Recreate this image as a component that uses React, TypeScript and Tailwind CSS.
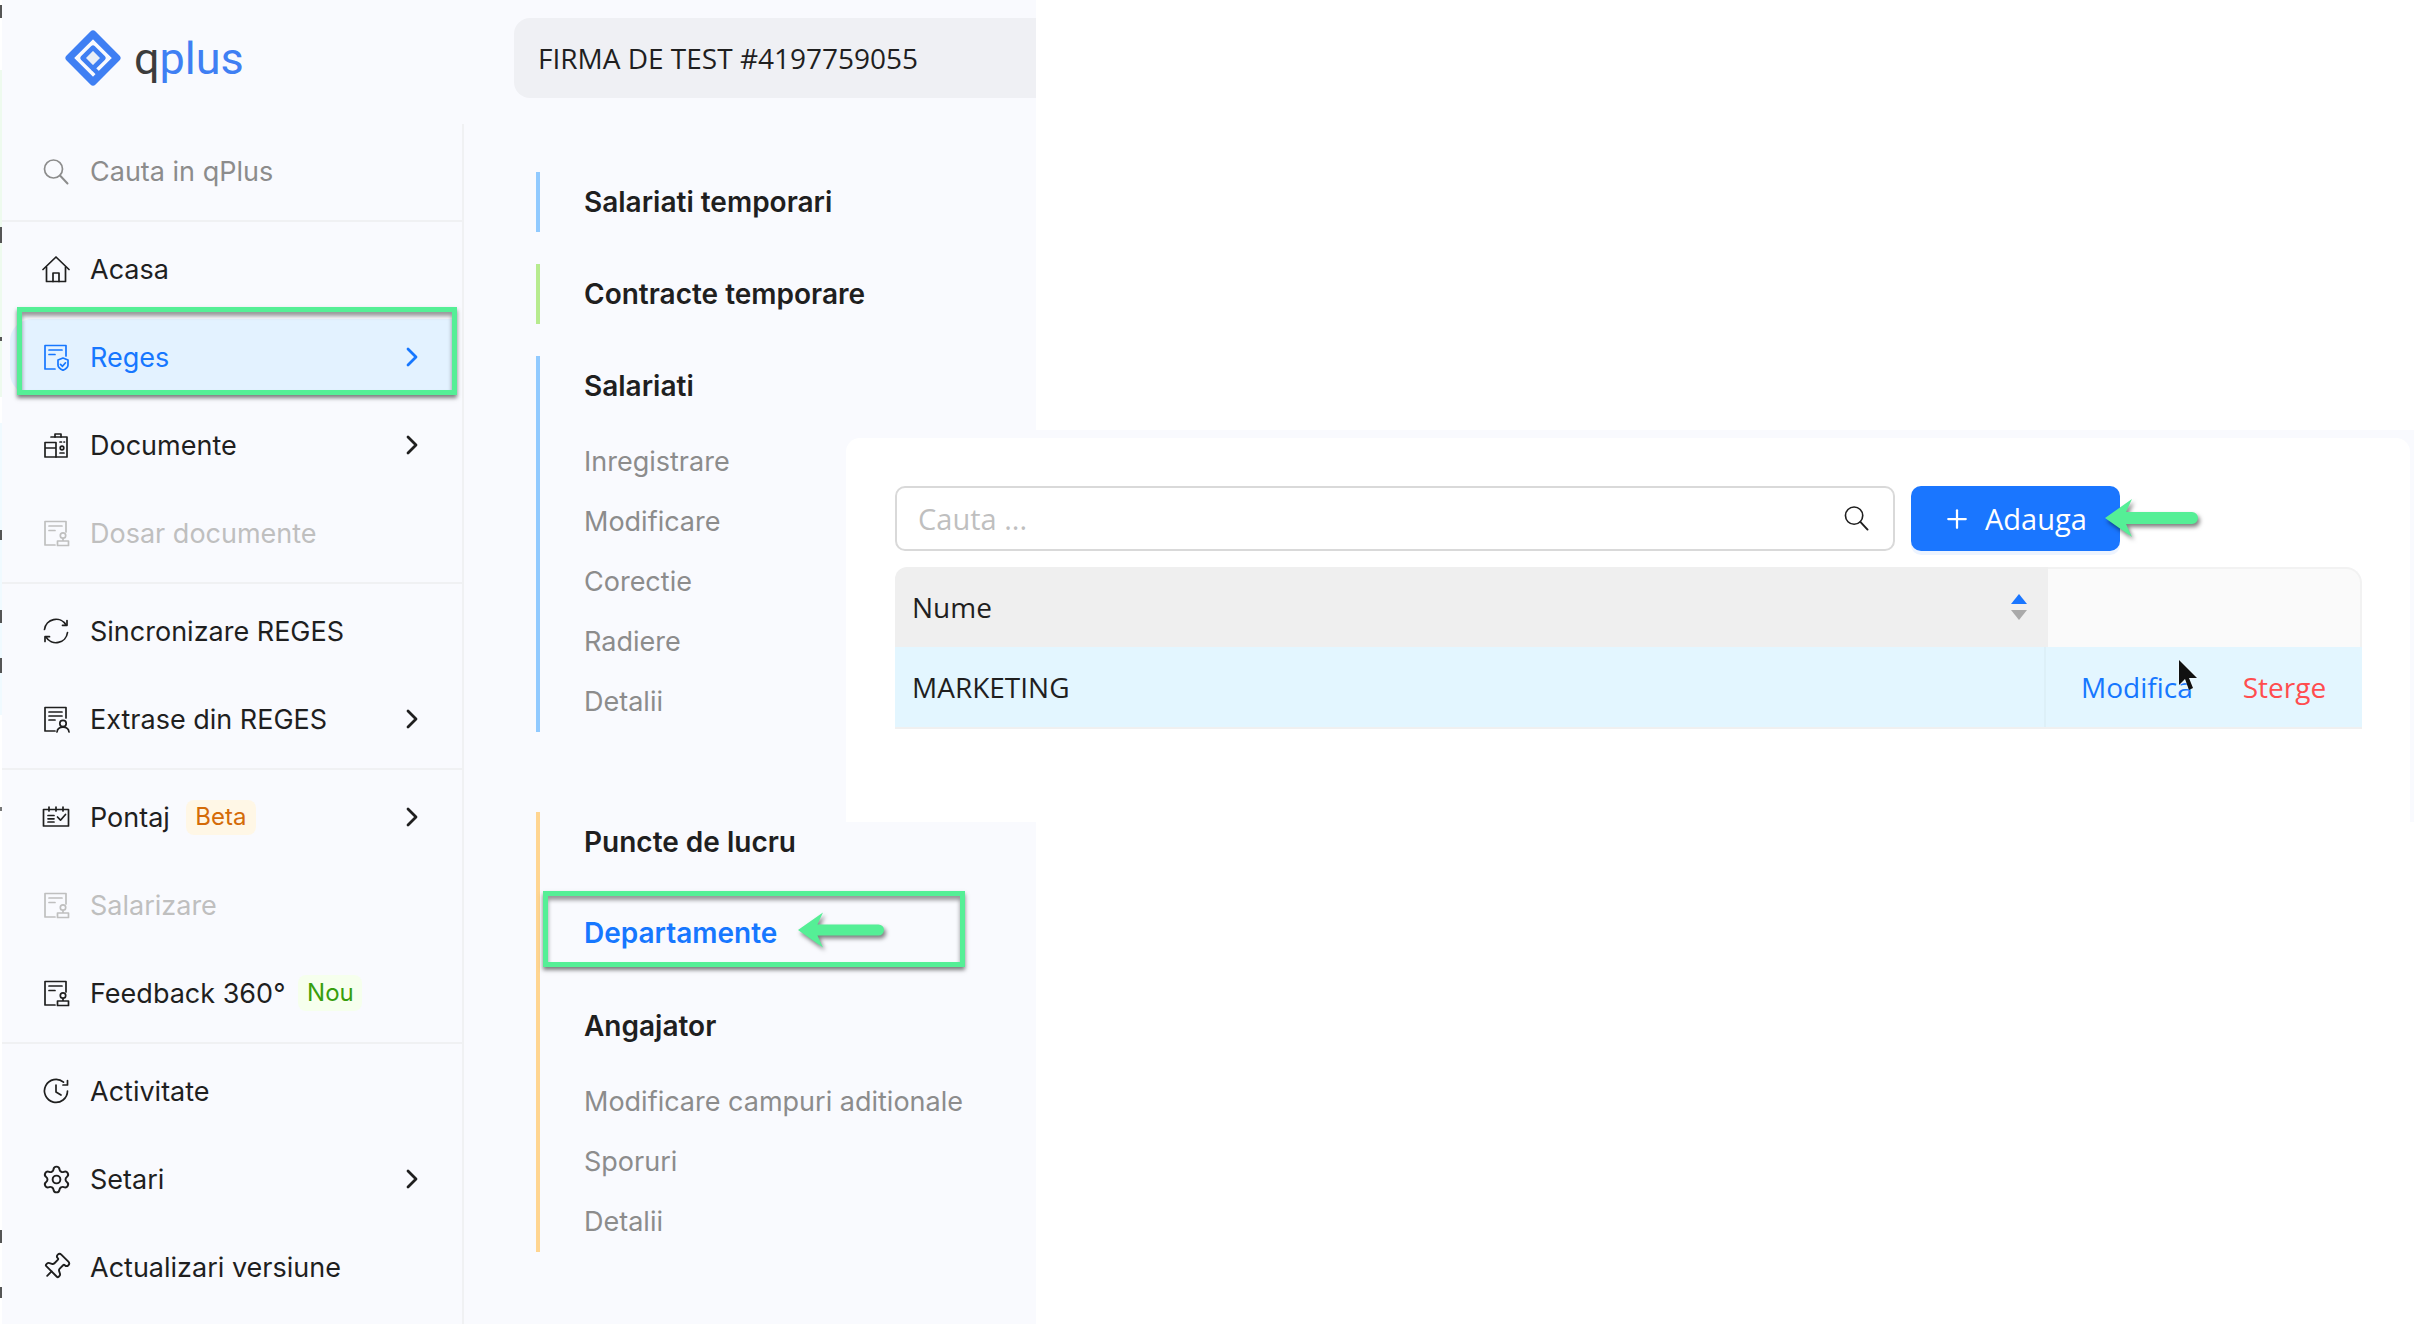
import { ChevronRight, Pin, Plus, Settings } from "lucide-react";
import type { ReactNode } from "react";

const INTER = "font-['Inter',sans-serif]";
const OPEN = "font-['Open_Sans',sans-serif]";

function Svg({ children, className = "" }: { children: ReactNode; className?: string }) {
  return (
    <svg
      viewBox="0 0 28 28"
      fill="none"
      stroke="currentColor"
      strokeWidth="1.7"
      strokeLinecap="round"
      strokeLinejoin="round"
      className={`w-[28px] h-[28px] ${className}`}
    >
      {children}
    </svg>
  );
}

const DocBase = ({ lines = 2 }: { lines?: number }) => (
  <>
    <path d="M24 13V2.500H3v23.500h10" />
    <path d="M7 7h13" />
    <path d={lines === 3 ? "M7 11h13M7 15h6" : "M7 11.500h6"} />
  </>
);

const ShieldDoc = () => (
  <Svg>
    <DocBase />
    <path d="M21 15l5 2v5c0 2.800-2.800 4.300-5 5.300-2.200-1-5-2.500-5-5.300v-5z" />
    <path d="M18.500 21.300l2 2 3-3.500" />
  </Svg>
);

const StampDoc = () => (
  <Svg>
    <DocBase />
    <circle cx="21" cy="16.500" r="2.700" />
    <path d="M21 19.500v2.500M15.500 22h11v4.500h-11z" />
  </Svg>
);

const PersonDoc = () => (
  <Svg>
    <DocBase lines={3} />
    <circle cx="21" cy="18.500" r="3.200" />
    <path d="M15 27c.4-3 3-4.800 6-4.800s5.600 1.800 6 4.800" />
  </Svg>
);

const FolderDocs = () => (
  <Svg>
    <path d="M9 6h16v20H14" />
    <path d="M13 6V3h6v3" />
    <path d="M3 11.500h11V26H3zM3 17h11" />
    <path d="M18 11h1.500M22 11h.5" />
    <circle cx="20" cy="17" r="1.800" />
    <path d="M18 22h4" />
  </Svg>
);

const Sync = () => (
  <Svg>
    <path d="M2.500 12.500A11.600 11.600 0 0 1 24 8" />
    <path d="M25 3.500v4.800h-4.500" />
    <path d="M25.500 15.500A11.600 11.600 0 0 1 4 20" />
    <path d="M3 24.500v-4.800h4.500" />
  </Svg>
);

const Calendar = () => (
  <Svg>
    <path d="M1.500 6.500h25v16.500h-25z" />
    <path d="M7 4v4M14 4v4M21 4v4" />
    <path d="M6 12.500h6M6 15.800h6M6 19h6" />
    <path d="M15.500 14l3 3.200 5-5.700" />
  </Svg>
);

const History = () => (
  <Svg>
    <path d="M21.500 5.200A11.500 11.500 0 1 0 25.500 14" />
    <path d="M25.500 3.500v4.500H21" />
    <path d="M14 8v7l5 3" />
  </Svg>
);

const Home = () => (
  <Svg>
    <path d="M1 14.500L14 2 27 14.500" />
    <path d="M4.500 12v14.500h19V12" />
    <path d="M11 26.500V18h6v8.500" />
  </Svg>
);

const Lens = ({ className }: { className: string }) => (
  <svg viewBox="0 0 26 26" fill="none" stroke="currentColor" strokeLinecap="round" className={`shrink-0 ${className}`}>
    <circle cx="10.500" cy="10" r="9" strokeWidth="1.700" />
    <path d="M17 16.500L24.500 24.500" strokeWidth="2" />
  </svg>
);

type RowProps = {
  icon: ReactNode;
  label: string;
  arrow?: boolean;
  disabled?: boolean;
  active?: boolean;
  badge?: ReactNode;
};

function MenuRow({ icon, label, arrow, disabled, active, badge }: RowProps) {
  const color = active ? "text-[#1677ff]" : disabled ? "text-[#bfbfbf]" : "text-[#1f1f1f]";
  return (
    <div className={`relative h-[88px] flex items-center pl-[40px] pr-[34px] ${color}`}>
      {active && <span className="absolute left-[8px] right-[6px] top-[6px] bottom-[6px] rounded-l-[22px] bg-[#e3f2ff]" />}
      <span className="relative shrink-0 w-[28px] flex justify-center">{icon}</span>
      <span className="relative ml-[20px] text-[27px] leading-none">{label}</span>
      {badge}
      {arrow && <ChevronRight size={32} strokeWidth={2.1} className="relative ml-auto" />}
      {active && (
        <span className="absolute left-[15px] top-[-6px] w-[440px] h-[88px] border-[5px] border-[#55ef96] shadow-[0_3px_4px_rgba(0,0,0,0.5),inset_0_4px_4px_rgba(0,0,0,0.4)]" />
      )}
    </div>
  );
}

function Group({ children, last }: { children: ReactNode; last?: boolean }) {
  return <div className={`pt-[3px] pb-[5px] ${last ? "" : "border-b-2 border-[#f0f1f3]"}`}>{children}</div>;
}

function GreenArrow({ className }: { className: string }) {
  return (
    <svg
      viewBox="0 0 93 38"
      className={`absolute overflow-visible drop-shadow-[2px_3px_2px_rgba(0,0,0,0.5)] ${className}`}
    >
      <path d="M0 19L27 0 21 13H87a6 6 0 0 1 0 12H21L27 38Z" fill="#55ef96" />
    </svg>
  );
}

function SubHead({ children }: { children: ReactNode }) {
  return <div className="h-[60px] flex items-center text-[28px] font-semibold text-[#1f1f1f]">{children}</div>;
}

function SubItems({ items }: { items: string[] }) {
  return (
    <div className="pt-[16px]">
      {items.map((item) => (
        <div key={item} className="h-[60px] flex items-center text-[27px] text-[#8c8c8c]">
          {item}
        </div>
      ))}
    </div>
  );
}

// left edge of the screenshot shows a sliver of whatever was behind it
const STRIP = [
  { h: 5, c: "bg-white" },
  { h: 13, c: "bg-[#555555]" },
  { h: 52, c: "bg-white" },
  { h: 157, c: "bg-[#eefaee]" },
  { h: 16, c: "bg-[#555555]" },
  { h: 94, c: "bg-[#eefaee]" },
  { h: 4, c: "bg-[#555555]" },
  { h: 56, c: "bg-[#eefaee]" },
  { h: 26, c: "bg-white" },
  { h: 107, c: "bg-[#f0faff]" },
  { h: 10, c: "bg-[#555555]" },
  { h: 70, c: "bg-[#f0faff]" },
  { h: 13, c: "bg-[#555555]" },
  { h: 35, c: "bg-[#f0faff]" },
  { h: 15, c: "bg-[#555555]" },
  { h: 42, c: "bg-[#f0faff]" },
  { h: 92, c: "bg-white" },
  { h: 4, c: "bg-[#777777]" },
  { h: 419, c: "bg-white" },
  { h: 13, c: "bg-[#555555]" },
  { h: 44, c: "bg-white" },
  { h: 11, c: "bg-[#555555]" },
  { h: 26, c: "bg-white" },
];

export default function App() {
  return (
    <div className={`relative w-[2414px] h-[1324px] overflow-hidden bg-white flex ${INTER}`}>
      <div className="w-[2px] shrink-0">
        {STRIP.map((s, i) => (
          <div key={i} className={s.c} style={{ height: s.h }} />
        ))}
      </div>

      <div className="w-[1034px] shrink-0 bg-[#f9fafe] flex flex-col">
        <header className="h-[124px] flex items-start">
          <div className="w-[512px] h-[116px] flex items-center pl-[63px]">
            <svg viewBox="0 0 54 54" className="w-[56px] h-[56px]">
              <path d="M27 4L50 27 27 50 4 27Z" fill="none" stroke="#3f7ff3" strokeWidth="7" strokeLinejoin="round" />
              <path d="M27 17L37 27 27 37 17 27Z" fill="#e9eef6" stroke="#3f7ff3" strokeWidth="4.500" strokeLinejoin="round" />
              <path d="M27 37l8 8" stroke="#3f7ff3" strokeWidth="4.500" />
            </svg>
            <span className="ml-[13px] text-[45px] leading-none font-['Roboto',sans-serif] text-[#3f7ff3]">
              <span className="text-[#3c3c3c]">q</span>plus
            </span>
          </div>
          <div className={`mt-[18px] flex-1 h-[80px] rounded-l-2xl bg-[#eff0f4] flex items-center pl-[24px] text-[28px] text-[#1f1f1f] ${OPEN}`}>
            FIRMA DE TEST #4197759055
          </div>
        </header>

        <div className="flex flex-1">
          <nav className="w-[462px] shrink-0 border-r-2 border-[#f0f1f3]">
            <div className="h-[98px] flex items-center pl-[41px] border-b-2 border-[#f0f1f3] text-[#8c8c8c]">
              <Lens className="w-[26px] h-[26px]" />
              <span className="ml-[21px] text-[27px]">Cauta in qPlus</span>
            </div>
            <Group>
              <MenuRow icon={<Home />} label="Acasa" />
              <MenuRow icon={<ShieldDoc />} label="Reges" arrow active />
              <MenuRow icon={<FolderDocs />} label="Documente" arrow />
              <MenuRow icon={<StampDoc />} label="Dosar documente" disabled />
            </Group>
            <Group>
              <MenuRow icon={<Sync />} label="Sincronizare REGES" />
              <MenuRow icon={<PersonDoc />} label="Extrase din REGES" arrow />
            </Group>
            <Group>
              <MenuRow
                icon={<Calendar />}
                label="Pontaj"
                arrow
                badge={
                  <span className="relative ml-[16px] h-[35px] w-[70px] rounded-lg bg-[#fff7e6] flex items-center justify-center text-[24px] text-[#d46b08]">
                    Beta
                  </span>
                }
              />
              <MenuRow icon={<StampDoc />} label="Salarizare" disabled />
              <MenuRow
                icon={<StampDoc />}
                label="Feedback 360°"
                badge={
                  <span className="relative ml-[13px] h-[36px] w-[64px] rounded-lg bg-[#f6ffed] flex items-center justify-center text-[24px] text-[#389e0d]">
                    Nou
                  </span>
                }
              />
            </Group>
            <Group last>
              <MenuRow icon={<History />} label="Activitate" />
              <MenuRow icon={<Settings size={31} strokeWidth={1.5} className="shrink-0" />} label="Setari" arrow />
              <MenuRow icon={<Pin size={30} strokeWidth={1.5} className="shrink-0 rotate-45" />} label="Actualizari versiune" />
            </Group>
          </nav>

          <section className="flex-1 pl-[72px] pt-[48px] flex flex-col">
            <div className="border-l-[4px] border-[#91caff] pl-[44px] mb-[32px]">
              <SubHead>Salariati temporari</SubHead>
            </div>
            <div className="border-l-[4px] border-[#b7eb8f] pl-[44px] mb-[32px]">
              <SubHead>Contracte temporare</SubHead>
            </div>
            <div className="border-l-[4px] border-[#91caff] pl-[44px] mb-[80px]">
              <SubHead>Salariati</SubHead>
              <SubItems items={["Inregistrare", "Modificare", "Corectie", "Radiere", "Detalii"]} />
            </div>
            <div className="border-l-[4px] border-[#ffd591] pl-[44px]">
              <SubHead>Puncte de lucru</SubHead>
              <div className="relative mt-[31px] h-[60px] flex items-center text-[28px] font-semibold text-[#1677ff]">
                Departamente
                <span className="absolute left-[-41px] top-[-12px] w-[422px] h-[76px] border-[5px] border-[#55ef96] shadow-[0_3px_4px_rgba(0,0,0,0.5),inset_0_4px_4px_rgba(0,0,0,0.4)]" />
                <GreenArrow className="left-[214px] top-[8px] w-[86px] h-[38px]" />
              </div>
              <div className="mt-[33px]">
                <SubHead>Angajator</SubHead>
              </div>
              <SubItems items={["Modificare campuri aditionale", "Sporuri", "Detalii"]} />
            </div>
          </section>
        </div>
      </div>

      {/* pasted table card, sits over the submenu */}
      <div className="absolute left-[838px] top-[430px] right-0 h-[392px] bg-[#f9fafe] pl-[8px] pt-[8px] pr-[4px]">
        <div className={`h-full bg-white rounded-t-[14px] pl-[49px] pt-[48px] ${OPEN}`}>
          <div className="relative w-[1225px] flex gap-[16px]">
            <div className="flex-1 h-[65px] border-2 border-[#d9d9d9] rounded-[10px] flex items-center pl-[21px] pr-[24px] text-[29px] text-[#bfbfbf]">
              Cauta ...
              <Lens className="ml-auto w-[25px] h-[25px] text-[#1f1f1f]" />
            </div>
            <div className="w-[209px] h-[65px] rounded-[10px] bg-[#1a76ff] shadow-[0_4px_0_rgba(26,118,255,0.08)] flex items-center pl-[31px] text-white text-[29px] font-medium">
              <Plus size={30} strokeWidth={1.8} />
              <span className="ml-[13px]">Adauga</span>
            </div>
          </div>

          <div className="relative w-[1467px] mt-[16px] text-[28px] text-[#1f1f1f]">
            <GreenArrow className="left-[1210px] top-[-68px] w-[93px] h-[38px]" />
            <div className="flex h-[80px]">
              <div className="w-[1153px] bg-[#efefef] rounded-tl-xl flex items-center pl-[17px] pr-[21px]">
                <span className="font-medium">Nume</span>
                <span className="ml-auto flex flex-col gap-[6px]">
                  <span className="w-0 h-0 border-x-[8.500px] border-x-transparent border-b-[10px] border-b-[#1a76ff]" />
                  <span className="w-0 h-0 border-x-[8.500px] border-x-transparent border-t-[10px] border-t-[#aaaaaa]" />
                </span>
              </div>
              <div className="flex-1 bg-[#fafafa] rounded-tr-2xl border-t-2 border-r-2 border-[#f2f2f2]" />
            </div>
            <div className="relative flex h-[82px] bg-[#e3f6ff] border-b-2 border-[#f0f0f0]">
              <div className="w-[1151px] flex items-center pl-[17px] border-r-2 border-[#ddf0f8]">MARKETING</div>
              <div className="flex-1 flex items-center pl-[35px]">
                <span className="text-[#1677ff]">Modifica</span>
                <span className="ml-[50px] text-[#ff4d4f]">Sterge</span>
              </div>
              <svg viewBox="0 0 20 32" className="absolute left-[1283px] top-[12px] w-[20px] h-[32px] drop-shadow-[0_0_1px_rgba(255,255,255,0.9)]">
                <path d="M1 1V26L7 20 11 31 15 29 11 19H19Z" fill="#111111" />
              </svg>
            </div>
          </div>
        </div>
      </div>
    </div>
  );
}
